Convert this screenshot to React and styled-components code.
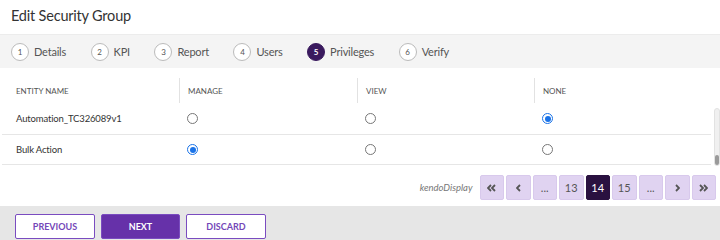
import React from "react";
import styled, { createGlobalStyle } from "styled-components";

const Global = createGlobalStyle`
  html, body { margin: 0; padding: 0; background: #fff; }
  body { font-family: Lato, "Open Sans", sans-serif; width: 720px; height: 240px; overflow: hidden; }
  * { box-sizing: border-box; }
`;

const Page = styled.div`
  width: 720px;
  height: 240px;
  display: flex;
  flex-direction: column;
`;

const Header = styled.div`
  height: 34px;
  display: flex;
  align-items: center;
  padding-left: 11px;
  font-size: 14.5px;
  letter-spacing: -0.2px;
  color: #333;
  padding-bottom: 3px;
`;

const Stepper = styled.div`
  height: 34px;
  background: #f4f4f4;
  border-top: 1px solid #ececec;
  display: flex;
  align-items: center;
  padding-left: 11px;
  gap: 24.5px;
`;

const Step = styled.div`
  display: flex;
  align-items: center;
  gap: 5px;
  font-size: 11px;
  letter-spacing: -0.2px;
  color: #555;
`;

const StepNum = styled.span`
  width: 18px;
  height: 18px;
  border-radius: 50%;
  display: inline-flex;
  align-items: center;
  justify-content: center;
  font-size: 8px;
  letter-spacing: 0;
  border: 1px solid ${(p) => (p.$active ? "#3a1a5e" : "#bbb")};
  background: ${(p) => (p.$active ? "#3a1a5e" : "#fff")};
  color: ${(p) => (p.$active ? "#fff" : "#555")};
  font-weight: ${(p) => (p.$active ? 700 : 400)};
`;

const Table = styled.div`
  margin-top: 10px;
  padding-left: 2px;
  display: flex;
  flex-direction: column;
`;

const HeadRow = styled.div`
  display: grid;
  grid-template-columns: 177px 178px 177px 177px;
  height: 25px;
  align-items: stretch;
`;

const HeadCell = styled.div`
  display: flex;
  align-items: center;
  font-size: 8px;
  color: #555;
  padding-left: ${(p) => (p.$first ? "14px" : "8px")};
  border-left: ${(p) => (p.$first ? "none" : "1px solid #e2e2e2")};
`;

const Body = styled.div`
  display: flex;
  width: 718px;
`;

const Rows = styled.div`
  display: flex;
  flex-direction: column;
  width: 709px;
`;

const Row = styled.div`
  display: grid;
  grid-template-columns: 177px 178px 177px 177px;
  height: ${(p) => p.$h}px;
  border-bottom: 1px solid #e6e6e6;
  align-items: center;
`;

const Cell = styled.div`
  font-size: 9.5px;
  letter-spacing: -0.15px;
  color: #333;
  padding-left: ${(p) => (p.$first ? "14px" : "8px")};
  display: flex;
  align-items: center;
`;

const Radio = styled.span`
  width: 11px;
  height: 11px;
  border-radius: 50%;
  border: 1px solid ${(p) => (p.$on ? "#1a73e8" : "#777")};
  background: #fff;
  display: inline-flex;
  align-items: center;
  justify-content: center;
  &::after {
    content: "";
    width: 6px;
    height: 6px;
    border-radius: 50%;
    background: ${(p) => (p.$on ? "#1a73e8" : "transparent")};
  }
`;

const Scroll = styled.div`
  width: 6px;
  margin-left: 3px;
  margin-top: 5px;
  height: 58px;
  border-radius: 3px;
  background: #f0f0f0;
  border: 1px solid #e2e2e2;
  display: flex;
  flex-direction: column;
  justify-content: flex-end;
`;

const Thumb = styled.div`
  height: 10px;
  border-radius: 3px;
  background: #9a9a9a;
`;

const Pager = styled.div`
  display: flex;
  align-items: center;
  justify-content: flex-end;
  padding-right: 4px;
  margin-top: 9px;
  height: 25px;
`;

const Info = styled.span`
  font-style: italic;
  font-size: 9.5px;
  color: #777;
  margin-right: 7px;
`;

const Pages = styled.div`
  display: flex;
  gap: 2px;
`;

const PageBtn = styled.div`
  width: 24.5px;
  height: 25px;
  display: flex;
  align-items: center;
  justify-content: center;
  border-radius: 2px;
  font-size: 11px;
  background: ${(p) => (p.$active ? "#2a1140" : "#e0d3f1")};
  color: ${(p) => (p.$active ? "#fff" : "#555")};
  border: 1px solid ${(p) => (p.$active ? "#2a1140" : "#d8c9ec")};
`;

const Footer = styled.div`
  margin-top: 6px;
  flex: 1;
  background: #e6e6e6;
  display: flex;
  align-items: flex-start;
  padding: 8px 0 0 15px;
  gap: 6px;
`;

const Btn = styled.button`
  width: ${(p) => p.$w}px;
  height: 25px;
  border-radius: 2px;
  font-family: Lato, "Open Sans", sans-serif;
  font-size: 9px;
  font-weight: 700;
  border: 1px solid #7a4cc0;
  background: ${(p) => (p.$primary ? "#6631a9" : "#fff")};
  color: ${(p) => (p.$primary ? "#fff" : "#7447b8")};
  padding: 0;
`;

const Chevron = ({ dir = "left", double = false }) => {
  const pts = (x) =>
    dir === "left" ? `${x + 3},1 ${x},4 ${x + 3},7` : `${x},1 ${x + 3},4 ${x},7`;
  return (
    <svg width={double ? 9 : 5} height="8" viewBox={double ? "0 0 9 8" : "0 0 5 8"}>
      <polyline points={pts(1)} fill="none" stroke="#555" strokeWidth="1.8" />
      {double && <polyline points={pts(5)} fill="none" stroke="#555" strokeWidth="1.8" />}
    </svg>
  );
};

const steps = ["Details", "KPI", "Report", "Users", "Privileges", "Verify"];
const rows = [
  { name: "Automation_TC326089v1", sel: 2, h: 32 },
  { name: "Bulk Action", sel: 0, h: 30 },
];

export default function App() {
  return (
    <Page>
      <Global />
      <Header>Edit Security Group</Header>
      <Stepper>
        {steps.map((s, i) => (
          <Step key={s}>
            <StepNum $active={i === 4}>{i + 1}</StepNum>
            {s}
          </Step>
        ))}
      </Stepper>
      <Table>
        <HeadRow>
          <HeadCell $first>ENTITY NAME</HeadCell>
          <HeadCell>MANAGE</HeadCell>
          <HeadCell>VIEW</HeadCell>
          <HeadCell>NONE</HeadCell>
        </HeadRow>
        <Body>
          <Rows>
            {rows.map((r) => (
              <Row key={r.name} $h={r.h}>
                <Cell $first>{r.name}</Cell>
                {[0, 1, 2].map((c) => (
                  <Cell key={c}>
                    <Radio $on={r.sel === c} />
                  </Cell>
                ))}
              </Row>
            ))}
          </Rows>
          <Scroll>
            <Thumb />
          </Scroll>
        </Body>
      </Table>
      <Pager>
        <Info>kendoDisplay</Info>
        <Pages>
          <PageBtn><Chevron dir="left" double /></PageBtn>
          <PageBtn><Chevron dir="left" /></PageBtn>
          <PageBtn>...</PageBtn>
          <PageBtn>13</PageBtn>
          <PageBtn $active>14</PageBtn>
          <PageBtn>15</PageBtn>
          <PageBtn>...</PageBtn>
          <PageBtn><Chevron dir="right" /></PageBtn>
          <PageBtn><Chevron dir="right" double /></PageBtn>
        </Pages>
      </Pager>
      <Footer>
        <Btn $w={80}>PREVIOUS</Btn>
        <Btn $w={79} $primary>NEXT</Btn>
        <Btn $w={80}>DISCARD</Btn>
      </Footer>
    </Page>
  );
}
